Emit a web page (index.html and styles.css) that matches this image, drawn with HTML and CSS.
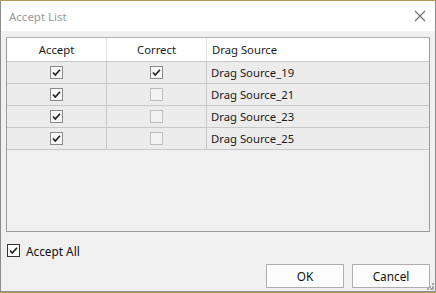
FILE: index.html
```html
<!DOCTYPE html>
<html lang="en">
<head>
  <meta charset="UTF-8">
  <title>Accept List</title>
  <link rel="stylesheet" href="styles.css">
</head>
<body>
  <div class="window">
    <!-- Title bar -->
    <div class="titlebar">
      <span class="title">Accept List</span>
      <svg class="close" width="12" height="12" viewBox="0 0 12 12">
        <path d="M1 1 L11 11 M11 1 L1 11" stroke="#6e6e6e" stroke-width="1.1" fill="none"/>
      </svg>
    </div>

    <div class="content">
      <!-- List -->
      <div class="grid">
        <div class="row head">
          <div class="cell center">Accept</div>
          <div class="cell center">Correct</div>
          <div class="cell">Drag Source</div>
        </div>
        <div class="row">
          <div class="cell center"><span class="box on"><svg width="11" height="11" viewBox="0 0 11 11"><path d="M2 5.5 L4.3 8 L9 2.8" stroke="#222" stroke-width="1.7" fill="none"/></svg></span></div>
          <div class="cell center"><span class="box on"><svg width="11" height="11" viewBox="0 0 11 11"><path d="M2 5.5 L4.3 8 L9 2.8" stroke="#222" stroke-width="1.7" fill="none"/></svg></span></div>
          <div class="cell">Drag Source_19</div>
        </div>
        <div class="row">
          <div class="cell center"><span class="box on"><svg width="11" height="11" viewBox="0 0 11 11"><path d="M2 5.5 L4.3 8 L9 2.8" stroke="#222" stroke-width="1.7" fill="none"/></svg></span></div>
          <div class="cell center"><span class="box off"></span></div>
          <div class="cell">Drag Source_21</div>
        </div>
        <div class="row">
          <div class="cell center"><span class="box on"><svg width="11" height="11" viewBox="0 0 11 11"><path d="M2 5.5 L4.3 8 L9 2.8" stroke="#222" stroke-width="1.7" fill="none"/></svg></span></div>
          <div class="cell center"><span class="box off"></span></div>
          <div class="cell">Drag Source_23</div>
        </div>
        <div class="row">
          <div class="cell center"><span class="box on"><svg width="11" height="11" viewBox="0 0 11 11"><path d="M2 5.5 L4.3 8 L9 2.8" stroke="#222" stroke-width="1.7" fill="none"/></svg></span></div>
          <div class="cell center"><span class="box off"></span></div>
          <div class="cell">Drag Source_25</div>
        </div>
      </div>

      <!-- Accept all -->
      <label class="accept-all">
        <span class="box main"><svg width="11" height="11" viewBox="0 0 11 11"><path d="M2 5.5 L4.3 8 L9 2.8" stroke="#222" stroke-width="1.7" fill="none"/></svg></span>
        Accept All
      </label>

      <div class="buttons">
        <button class="btn">OK</button>
        <button class="btn">Cancel</button>
      </div>
    </div>

    <svg class="grip" width="7" height="7" viewBox="0 0 7 7">
      <rect x="5" y="0" width="2" height="2" fill="#a8a8a8"/>
      <rect x="2" y="3" width="2" height="2" fill="#a8a8a8"/>
      <rect x="5" y="3" width="2" height="2" fill="#a8a8a8"/>
      <rect x="0" y="5" width="2" height="2" fill="#a8a8a8"/>
      <rect x="3" y="5" width="2" height="2" fill="#a8a8a8"/>
      <rect x="5" y="5" width="2" height="2" fill="#a8a8a8"/>
    </svg>
  </div>
</body>
</html>
```

FILE: styles.css
```css
body {
  margin: 0;
  background: #b8955a;
  font-family: "Noto Sans", "Open Sans", sans-serif;
  font-size: 11.3px;
  color: #1a1a1a;
}
.window {
  position: relative;
  box-sizing: border-box;
  width: 436px;
  height: 291px;
  margin-top: 1px;
  border: 1px solid #8c8c8c;
  border-top: none;
  background: #f0f0f0;
  display: flex;
  flex-direction: column;
}
.titlebar {
  height: 30px;
  background: #fff;
  display: flex;
  align-items: center;
  justify-content: space-between;
  padding: 0 9px 0 8px;
}
.title {
  color: #999;
  font-size: 11.5px;
}
.content {
  flex: 1;
  display: flex;
  flex-direction: column;
  padding: 6px 5px 0 5px;
}
.grid {
  width: 424px;
  height: 195px;
  box-sizing: border-box;
  border: 1px solid #9c9c9c;
  border-top-color: #b4b4b4;
  background: #f0f0f0;
}
.row {
  display: grid;
  grid-template-columns: 100px 100px 222px;
  height: 21px;
  border-bottom: 1px solid #c8c8c8;
  background: #ececec;
}
.row.head {
  height: 23px;
  background: #fff;
}
.cell {
  display: flex;
  align-items: center;
  padding-left: 4px;
  border-right: 1px solid #c8c8c8;
  white-space: nowrap;
}
.head .cell {
  border-right-color: #e3e3e3;
  padding-left: 5px;
}
.cell:last-child {
  border-right: none;
}
.cell.center {
  justify-content: center;
  padding-left: 0;
}
.box {
  box-sizing: border-box;
  width: 13px;
  height: 13px;
  border: 1px solid #8a8a8a;
  background: #f8f8f8;
  display: flex;
  align-items: center;
  justify-content: center;
}
.box.off {
  border-color: #bdbdbd;
  background: #f3f3f3;
}
.accept-all {
  display: flex;
  align-items: center;
  gap: 6px;
  margin-top: 11px;
  margin-left: 1px;
  height: 15px;
  font-size: 11.8px;
  color: #111;
}
.box.main {
  border-color: #333;
  background: #fff;
}
.buttons {
  display: flex;
  justify-content: flex-end;
  gap: 8px;
  margin-top: 6px;
}
.btn {
  width: 78px;
  height: 24px;
  box-sizing: border-box;
  border: 1px solid #adadad;
  background: #fdfdfd;
  font-family: "Noto Sans", "Open Sans", sans-serif;
  font-size: 11.8px;
  color: #111;
  padding: 0;
}
.grip {
  position: absolute;
  right: 1px;
  bottom: 1px;
}
```
